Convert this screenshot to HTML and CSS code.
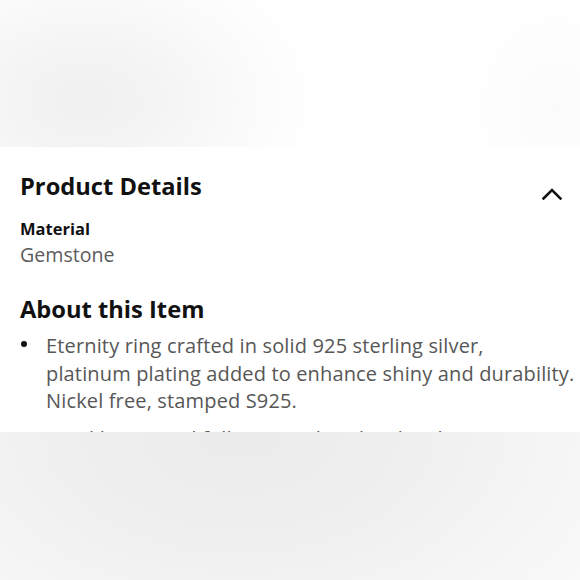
FILE: index.html
```html
<!DOCTYPE html>
<html lang="en">
<head>
  <meta charset="UTF-8">
  <title>Product Details</title>
  <meta name="viewport" content="width=device-width, initial-scale=1.0">
  <link rel="stylesheet" href="styles.css">
</head>
<body>
  <div class="backdrop backdrop-top"></div>
  <section class="sheet">
    <div class="sheet-head">
      <h2>Product Details</h2>
      <svg class="chevron" width="20" height="13" viewBox="0 0 20 13" aria-hidden="true">
        <polyline points="1.5,11.5 10,3 18.5,11.5" />
      </svg>
    </div>
    <dl class="spec">
      <dt>Material</dt>
      <dd>Gemstone</dd>
    </dl>
    <h2>About this Item</h2>
    <ul class="about-list">
      <li><span>Eternity ring crafted in solid 925 sterling silver,<br>platinum plating added to enhance shiny and durability.<br>Nickel free, stamped S925.</span></li>
      <li><span>Sparkling round full eternity band with cubic zirconia stones all around.</span></li>
    </ul>
  </section>
  <div class="backdrop backdrop-bottom"></div>
</body>
</html>
```

FILE: styles.css
```css
body {
  margin: 0;
  padding: 0;
  background: #fff;
  font-family: "Open Sans", "Noto Sans", sans-serif;
  color: #0f1111;
  width: 580px;
  height: 580px;
  overflow: hidden;
}
.backdrop-top {
  height: 147px;
  background:
    radial-gradient(ellipse 75px 95px at 555px 110px, #fbfbfb 0%, rgba(252,252,252,0) 100%),
    radial-gradient(ellipse 220px 150px at 85px 100px, #f0f0f0 0%, #f4f4f4 35%, #fafafa 70%, rgba(255,255,255,0) 100%),
    #fefefe;
}
.sheet {
  height: 285px;
  overflow: hidden;
  padding: 24px 0 0 20px;
  box-sizing: border-box;
}
.sheet h2 {
  margin: 0;
  font-size: 23.7px;
  line-height: 30px;
  font-weight: 700;
  color: #111;
}
.sheet-head {
  display: flex;
  justify-content: space-between;
  align-items: flex-start;
  padding-right: 18px;
}
.chevron {
  margin-top: 16px;
}
.chevron polyline {
  fill: none;
  stroke: #111;
  stroke-width: 2.6;
  stroke-linecap: square;
}
.spec {
  margin: 17px 0 26px;
}
.spec dt {
  font-size: 16.5px;
  line-height: 22px;
  font-weight: 700;
}
.spec dd {
  margin: 2px 0 0;
  font-size: 19.6px;
  line-height: 26px;
  color: #5c5c5c;
}
.about-list {
  list-style: none;
  margin: 8px 0 0;
  padding: 0;
}
.about-list li {
  display: grid;
  grid-template-columns: 26px 1fr;
  font-size: 20px;
  letter-spacing: 0.15px;
  line-height: 27.5px;
  color: #575757;
  margin-bottom: 10px;
  white-space: nowrap;
}
.about-list li::before {
  content: "";
  width: 6px;
  height: 6px;
  border-radius: 50%;
  background: #111;
  margin: 9px 0 0 1px;
}
.backdrop-bottom {
  height: 148px;
  background:
    radial-gradient(ellipse 420px 260px at 240px 0px, #ebebeb 0%, #efefef 40%, #f5f5f5 75%, #f9f9f9 100%),
    #f9f9f9;
}
```
